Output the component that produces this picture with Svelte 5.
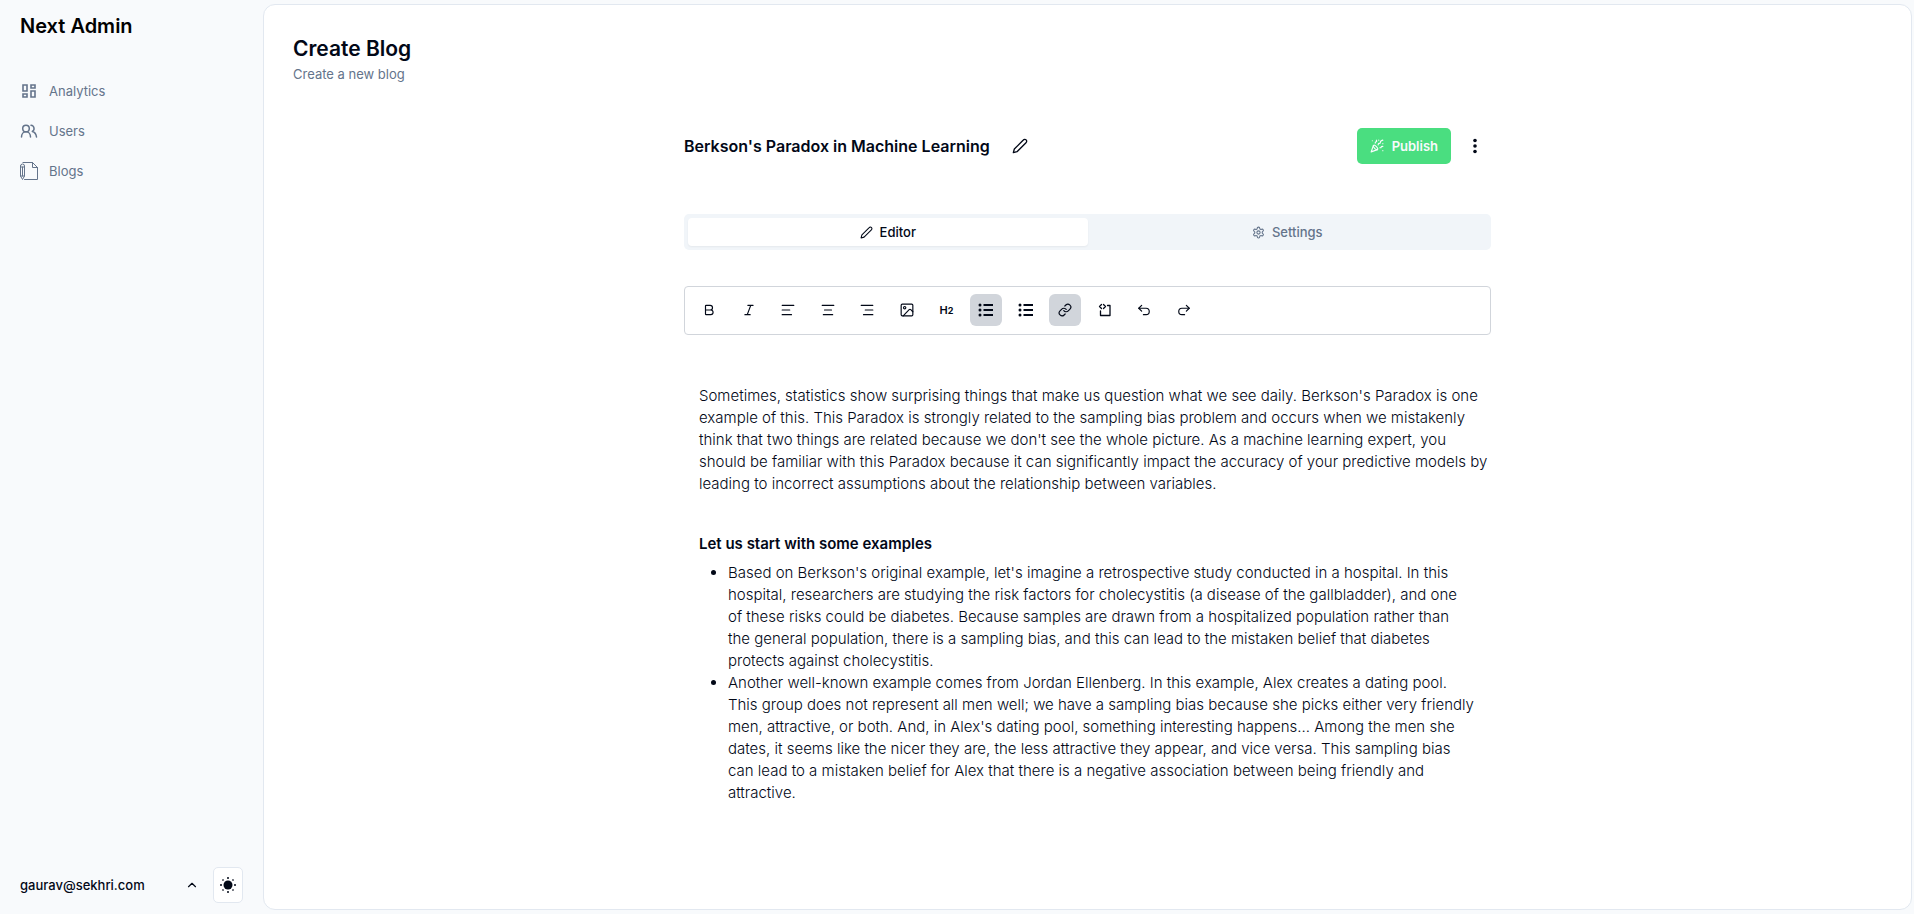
<script lang="ts">
  const nav = [
    { label: 'Analytics', icon: 'grid' },
    { label: 'Users', icon: 'users' },
    { label: 'Blogs', icon: 'blog' },
  ];

  const tools = [
    { label: 'Bold', icon: 'bold' },
    { label: 'Italic', icon: 'italic' },
    { label: 'Align left', icon: 'left' },
    { label: 'Align center', icon: 'center' },
    { label: 'Align right', icon: 'right' },
    { label: 'Image', icon: 'image' },
    { label: 'Heading 2', icon: 'h2' },
    { label: 'Bullet list', icon: 'list', active: true },
    { label: 'Ordered list', icon: 'list' },
    { label: 'Link', icon: 'link', active: true },
    { label: 'Code block', icon: 'code' },
    { label: 'Undo', icon: 'undo' },
    { label: 'Redo', icon: 'redo' },
  ];

  let tab = $state('editor');
</script>

{#snippet pencil(size: number)}
  <svg width={size} height={size} viewBox="0 0 24 24" class="line"><path d="M17 3a2.85 2.83 0 1 1 4 4L7.5 20.5 2 22l1.5-5.5Z" /></svg>
{/snippet}

{#snippet navIcon(name: string)}
  {#if name === 'grid'}
    <svg width="18" height="18" viewBox="0 0 18 18" class="line sharp"><path d="M3 3h4v6H3zM11 3h4v3h-4zM11 9h4v6h-4zM3 12h4v3H3z" /></svg>
  {:else if name === 'users'}
    <svg width="18" height="18" viewBox="0 0 18 18" class="line medium"><circle cx="6" cy="6.500" r="3.300" /><path d="M1.500 15c0-3 2-5.200 4.500-5.200s4.500 2.200 4.500 5.200M11 3.200a3.300 3.300 0 0 1 1.300 6.200c2.300.6 3.900 2.800 4.200 5.600" /></svg>
  {:else}
    <svg width="18" height="18" viewBox="0 0 18 18" class="line thin"><path d="M3 .5h9.500L17.500 5.500v12H4.500M12.500.5v5h5M.5 4v10l2 3.500 2-3.500V4a2 2 0 0 0-4 0zM.5 5h4M2.500 5v9M.5 14h4" /></svg>
  {/if}
{/snippet}

{#snippet toolIcon(name: string)}
  {#if name === 'h2'}
    <span class="h2">H<small>2</small></span>
  {:else if name === 'list'}
    <svg width="16" height="16" viewBox="0 0 16 16" class="list"><path d="M5.500 3H15M5.500 8H15M5.500 13H15" /><circle cx="2" cy="3" r="1.500" /><circle cx="2" cy="8" r="1.500" /><circle cx="2" cy="13" r="1.500" /></svg>
  {:else if name === 'code'}
    <svg width="14" height="14" viewBox="0 0 14 14" class="line code"><path d="M3.500 1.500 1.500 3.500l2 2M5.500 1.500l2 2-2 2" /><path d="M9.500 2.500H12V12.500H2.500V8" /></svg>
  {:else}
    <svg width="16" height="16" viewBox="0 0 24 24" class="line">
      {#if name === 'bold'}
        <path d="M6 12h9a4 4 0 0 1 0 8H7a1 1 0 0 1-1-1V5a1 1 0 0 1 1-1h7a4 4 0 0 1 0 8" />
      {:else if name === 'italic'}
        <path d="M19 4h-9M14 20H5M15 4 9 20" />
      {:else if name === 'left'}
        <path d="M2 4h20M2 12h13M2 20h16" />
      {:else if name === 'center'}
        <path d="M2 4h20M6 12h12M4 20h16" />
      {:else if name === 'right'}
        <path d="M2 4h20M9 12h13M6 20h16" />
      {:else if name === 'image'}
        <rect x="2" y="2" width="20" height="20" rx="2" /><circle cx="8" cy="8" r="2" /><path d="m22 15-3.500-3.500a2 2 0 0 0-2.800 0L5.500 22" />
      {:else if name === 'link'}
        <path d="M10 13a5 5 0 0 0 7.540.54l3-3a5 5 0 0 0-7.070-7.070l-1.720 1.710" /><path d="M14 11a5 5 0 0 0-7.540-.54l-3 3a5 5 0 0 0 7.070 7.070l1.710-1.710" />
      {:else if name === 'undo'}
        <path d="M8 14 3 9l5-5" /><path d="M3 9h12.500a5.500 5.500 0 0 1 0 11H11" />
      {:else}
        <path d="m16 14 5-5-5-5" /><path d="M21 9H8.500a5.500 5.500 0 0 0 0 11H13" />
      {/if}
    </svg>
  {/if}
{/snippet}

<div class="shell">
  <aside>
    <a class="brand" href="#home">Next Admin</a>
    <nav>
      {#each nav as item}
        <a href="#{item.icon}">{@render navIcon(item.icon)}<span>{item.label}</span></a>
      {/each}
    </nav>
    <footer>
      <button class="account" type="button">
        <span>gaurav@sekhri.com</span>
        <svg width="14" height="14" viewBox="0 0 24 24" class="line"><path d="m6 15 6-6 6 6" /></svg>
      </button>
      <button class="theme" type="button" aria-label="Toggle theme">
        <svg width="16" height="16" viewBox="0 0 16 16"><circle cx="8" cy="8" r="4.500" fill="currentColor" /><path d="M8 0v2M8 14v2M0 8h2M14 8h2M2.500 2.500l1 1M12.500 12.500l1 1M2.500 13.500l1-1M12.500 3.500l1-1" stroke="currentColor" stroke-width="1.500" /></svg>
      </button>
    </footer>
  </aside>

  <main>
    <header>
      <h1>Create Blog</h1>
      <p>Create a new blog</p>
    </header>

    <section class="column">
      <div class="titlebar">
        <h2>Berkson's Paradox in Machine Learning</h2>
        <button class="icon" type="button" aria-label="Edit title">{@render pencil(16)}</button>
        <button class="publish" type="button">
          <svg width="14" height="14" viewBox="0 0 24 24" class="line"><path d="M5.800 11.300 2 22l10.700-3.790" /><path d="M4 3h.010M22 8h.010M15 2h.010M22 20h.010" /><path d="m22 2-2.240.75a2.900 2.900 0 0 0-1.960 3.120c.1.860-.57 1.630-1.450 1.630h-.38c-.86 0-1.600.6-1.760 1.440L14 10" /><path d="m22 13-.82-.33c-.86-.34-1.820.2-1.980 1.110c-.11.700-.72 1.220-1.430 1.220H17" /><path d="m11 2 .33.820c.34.860-.2 1.820-1.110 1.980C9.520 4.900 9 5.520 9 6.230V7" /><path d="M11 13c1.930 1.930 2.830 4.170 2 5-.83.830-3.070-.07-5-2-1.930-1.930-2.830-4.170-2-5 .83-.83 3.070.07 5 2Z" /></svg>
          Publish
        </button>
        <button class="icon more" type="button" aria-label="More options">
          <svg width="4" height="16" viewBox="0 0 4 16" fill="currentColor"><circle cx="2" cy="2.500" r="1.800" /><circle cx="2" cy="8" r="1.800" /><circle cx="2" cy="13.500" r="1.800" /></svg>
        </button>
      </div>

      <div class="tabs" role="tablist">
        <button type="button" role="tab" aria-selected={tab === 'editor'} onclick={() => (tab = 'editor')}>{@render pencil(13)}Editor</button>
        <button type="button" role="tab" aria-selected={tab === 'settings'} onclick={() => (tab = 'settings')}>
          <svg width="13" height="13" viewBox="0 0 24 24" class="line"><path d="M12.220 2h-.44a2 2 0 0 0-2 2v.18a2 2 0 0 1-1 1.730l-.43.25a2 2 0 0 1-2 0l-.15-.08a2 2 0 0 0-2.730.73l-.22.38a2 2 0 0 0 .73 2.730l.15.1a2 2 0 0 1 1 1.720v.51a2 2 0 0 1-1 1.740l-.15.09a2 2 0 0 0-.73 2.730l.22.38a2 2 0 0 0 2.730.73l.15-.08a2 2 0 0 1 2 0l.43.25a2 2 0 0 1 1 1.730V20a2 2 0 0 0 2 2h.44a2 2 0 0 0 2-2v-.18a2 2 0 0 1 1-1.730l.43-.25a2 2 0 0 1 2 0l.15.08a2 2 0 0 0 2.730-.73l.22-.39a2 2 0 0 0-.73-2.730l-.15-.08a2 2 0 0 1-1-1.740v-.5a2 2 0 0 1 1-1.740l.15-.09a2 2 0 0 0 .73-2.730l-.22-.38a2 2 0 0 0-2.730-.73l-.15.08a2 2 0 0 1-2 0l-.43-.25a2 2 0 0 1-1-1.730V4a2 2 0 0 0-2-2z" /><circle cx="12" cy="12" r="3" /></svg>
          Settings
        </button>
      </div>

      <div class="toolbar" role="toolbar" aria-label="Formatting">
        <div class="tools">
          {#each tools as tool}
            <button type="button" class:active={tool.active} aria-label={tool.label}>{@render toolIcon(tool.icon)}</button>
          {/each}
        </div>
      </div>

      <article>
        <p>
          Sometimes, statistics show surprising things that make us question what we see daily. Berkson's Paradox is one
          example of this. This Paradox is strongly related to the sampling bias problem and occurs when we mistakenly
          think that two things are related because we don't see the whole picture. As a machine learning expert, you
          should be familiar with this Paradox because it can significantly impact the accuracy of your predictive models by
          leading to incorrect assumptions about the relationship between variables.
        </p>
        <h3>Let us start with some examples</h3>
        <ul>
          <li>
            Based on Berkson's original example, let's imagine a retrospective study conducted in a hospital. In this
            hospital, researchers are studying the risk factors for cholecystitis (a disease of the gallbladder), and one
            of&nbsp;these risks could be diabetes. Because samples are drawn from a hospitalized population rather than
            the general population, there is a sampling bias, and this can lead to the mistaken belief that diabetes
            protects against cholecystitis.
          </li>
          <li>
            Another well-known example comes from Jordan Ellenberg. In this example, Alex creates a dating pool.
            This group does not represent all men well; we have a sampling bias because she picks either very friendly
            men, attractive, or both. And, in Alex's dating pool, something interesting happens... Among the men she
            dates, it seems like the nicer they are, the less attractive they appear, and vice versa. This sampling bias
            can lead to a mistaken belief for Alex that there is a negative association between being friendly and
            attractive.
          </li>
        </ul>
      </article>
    </section>
  </main>
</div>

<style>
  :global(body) {
    margin: 0;
    background: #f8fafc;
    color: #020817;
    font-family: Inter, sans-serif;
    font-size: 13px;
  }
  * { box-sizing: border-box; }
  button {
    font: inherit;
    color: inherit;
    border: 0;
    padding: 0;
    background: none;
    cursor: pointer;
  }
  a { color: inherit; text-decoration: none; }
  h1, h2, h3, p { margin: 0; }
  svg { display: block; flex: none; }
  .line {
    fill: none;
    stroke: currentColor;
    stroke-width: 2;
    stroke-linecap: round;
    stroke-linejoin: round;
  }
  .sharp { stroke-width: 1.6; stroke-linejoin: miter; }
  .medium { stroke-width: 1.5; }
  .code { stroke-width: 1.3; }
  .thin { stroke-width: 1; }

  .shell {
    display: grid;
    grid-template-columns: 263px minmax(0, 1fr);
    min-height: 100vh;
  }
  aside {
    display: flex;
    flex-direction: column;
    padding: 12px 20px 11px;
  }
  .brand {
    color: #000;
    font-size: 20px;
    font-weight: 600;
    line-height: 28px;
  }
  nav {
    display: grid;
    gap: 8px;
    margin-top: 35px;
    color: #64748b;
  }
  nav a {
    display: flex;
    align-items: center;
    gap: 11px;
    height: 32px;
  }
  footer {
    display: flex;
    align-items: center;
    gap: 14px;
    margin-top: auto;
  }
  .account {
    display: flex;
    flex: 1;
    align-items: center;
    justify-content: space-between;
    font-weight: 500;
  }
  .theme {
    display: grid;
    place-items: center;
    width: 30px;
    height: 36px;
    border: 1px solid #e2e8f0;
    border-radius: 5px;
    background: #fff;
  }

  main {
    margin: 4px 2px 4px 0;
    padding: 29px;
    border: 1px solid #e2e8f0;
    border-radius: 12px;
    background: #fff;
  }
  h1 { font-size: 21px; font-weight: 600; line-height: 30px; }
  header p { color: #64748b; line-height: 20px; }

  .column {
    max-width: 807px;
    margin: 44px auto 0;
  }
  .titlebar {
    display: flex;
    align-items: center;
    height: 36px;
  }
  h2 { font-size: 16px; font-weight: 600; line-height: 20px; }
  .icon {
    display: grid;
    place-items: center;
    width: 32px;
    height: 36px;
    margin-left: 14px;
  }
  .publish {
    display: flex;
    align-items: center;
    gap: 8px;
    height: 36px;
    margin-left: auto;
    padding: 0 13px;
    border-radius: 5px;
    background: #4ade80;
    color: #f8fafc;
    font-weight: 600;
  }
  .more { margin: 0 0 0 8px; }

  .tabs {
    display: grid;
    grid-template-columns: 1fr 1fr;
    height: 36px;
    margin-top: 50px;
    padding: 4px;
    border-radius: 5px;
    background: #f1f5f9;
  }
  .tabs button {
    display: flex;
    align-items: center;
    justify-content: center;
    gap: 7px;
    border-radius: 4px;
    color: #64748b;
    font-weight: 500;
  }
  .tabs [aria-selected='true'] {
    background: #fff;
    color: #020817;
    box-shadow: 0 1px 2px rgb(0 0 0 / 5%);
  }

  .toolbar {
    margin-top: 36px;
    padding: 7px 8px 8px;
    border: 1px solid #d1d5db;
    border-radius: 4px;
  }
  .tools {
    display: flex;
    justify-content: space-between;
    max-width: 507px;
  }
  .tools button {
    display: grid;
    place-items: center;
    width: 32px;
    height: 32px;
    border-radius: 6px;
  }
  .tools .active { background: #d1d5db; }
  .tools svg:not(.list) { width: 14px; height: 14px; }
  .list { fill: currentColor; stroke: currentColor; stroke-width: 2; }
  .list circle { stroke: none; }
  .h2 { font-size: 11px; font-weight: 600; line-height: 14px; }
  small { font-size: 9px; font-weight: 700; }

  article {
    padding: 50px 3px 0 15px;
    font-size: 15px;
    font-weight: 300;
    line-height: 22px;
  }
  h3 {
    margin-top: 38px;
    font-size: 15px;
    font-weight: 600;
    line-height: 22px;
  }
  ul {
    margin: 7px 0 0;
    padding: 0 13px 0 29px;
  }
</style>
